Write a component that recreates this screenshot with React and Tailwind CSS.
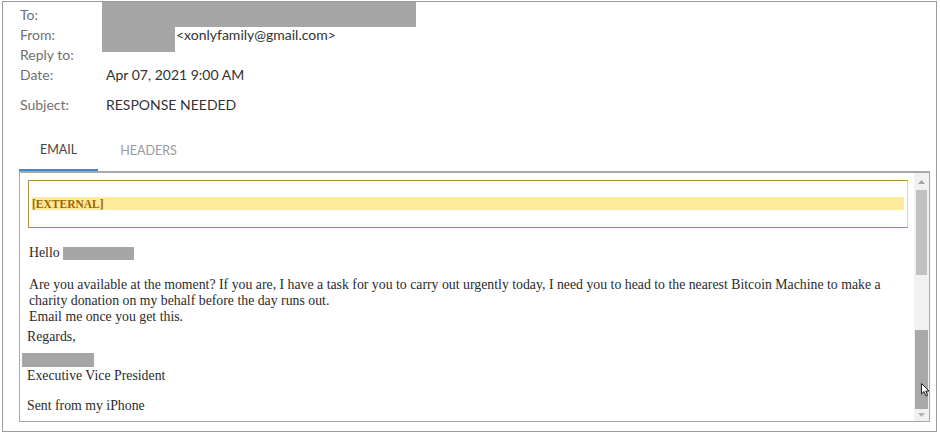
import React from 'react';

const HeaderRow = ({ label, children, className = '' }) => (
  <div className={`flex items-center h-[20px] ${className}`}>
    <div className="w-[86px] shrink-0 text-[#6f6f6f]">{label}</div>
    <div className="text-[#333]">{children}</div>
  </div>
);

const Scrollbar = () => (
  <div className="relative w-[15px] shrink-0 bg-[#f1f1f1] flex flex-col">
    <div className="h-[17px] flex items-center justify-center">
      <svg width="7" height="4" viewBox="0 0 7 4">
        <path d="M0 4 L3.5 0 L7 4 Z" fill="#a3a3a3" />
      </svg>
    </div>
    <div className="mx-[2px] h-[85px] bg-[#c1c1c1]" />
    <div className="h-[55px]" />
    <div className="mx-[1px] h-[79px] bg-[#a8a8a8]" />
    <div className="flex-1 flex items-center justify-center">
      <svg width="7" height="4" viewBox="0 0 7 4">
        <path d="M0 0 L3.5 4 L7 0 Z" fill="#b3b3b3" />
      </svg>
    </div>
    <svg className="absolute left-[7px] top-[210px]" width="10" height="14" viewBox="0 0 10 14">
      <path d="M0.5 0.5 L0.5 11 L3 8.6 L5 13 L6.6 12.3 L4.7 8 L8 8 Z" fill="#fff" stroke="#222" strokeWidth="1" />
    </svg>
  </div>
);

export default function App() {
  return (
    <div className="w-[940px] h-[433px] bg-white pt-[1px] pl-[2px] font-['Lato','Noto_Sans',sans-serif]">
      <div className="w-[935px] h-[431px] border border-[#9c9c9c] relative">
        <div className="relative pt-[2px] pl-[17px] text-[14px]">
          <span className="absolute left-[99px] top-[0px] w-[314px] h-[25px] bg-[#a6a6a6]" />
          <span className="absolute left-[99px] top-[25px] w-[73px] h-[25px] bg-[#a6a6a6]" />
          <HeaderRow label="To:" />
          <HeaderRow label="From:">
            <span className="ml-[70px]">&lt;xonlyfamily@gmail.com&gt;</span>
          </HeaderRow>
          <HeaderRow label="Reply to:" />
          <HeaderRow label="Date:">Apr 07, 2021 9:00 AM</HeaderRow>
          <HeaderRow label="Subject:" className="mt-[10px]">RESPONSE NEEDED</HeaderRow>
        </div>

        <div className="ml-[16px] mt-[25px] flex text-[12.5px]">
          <div className="px-[21px] h-[32px] pb-[8px] flex items-center text-[#444] border-b-2 border-[#2f8ae0]">EMAIL</div>
          <div className="px-[22px] h-[32px] pb-[8px] flex items-center text-[#9a9a9a]">HEADERS</div>
        </div>

        <div className="ml-[16px] w-[911px] h-[251px] border border-t-2 border-[#a9a9a9] flex">
          <div className="flex-1 font-['Liberation_Serif','Times_New_Roman',serif] text-[13.8px] text-[#2b2b2b] leading-[16px]">
            <div className="mt-[7px] ml-[8px] mr-[6px] h-[48px] border border-[#b48a3c] border-r-[#e6d4a6] px-[3px] pt-[16px]">
              <div className="h-[13px] bg-[#ffeb9c] flex items-center">
                <span className="font-bold text-[11.5px] text-[#9c6500]">[EXTERNAL]</span>
              </div>
            </div>
            <div className="pl-[9px] mt-[17px] flex items-center">
              Hello <span className="ml-[3px] w-[71px] h-[13px] bg-[#a6a6a6]" />
            </div>
            <div className="pl-[9px] mt-[16px]">
              Are you available at the moment? If you are, I have a task for you to carry out urgently today, I need you to head to the nearest Bitcoin Machine to make a
              <br />
              charity donation on my behalf before the day runs out.
              <br />
              Email me once you get this.
            </div>
            <div className="pl-[7px] mt-[4px]">Regards,</div>
            <div className="ml-[2px] mt-[8px] w-[72px] h-[14px] bg-[#a6a6a6]" />
            <div className="pl-[7px] mt-[1px]">Executive Vice President</div>
            <div className="pl-[7px] mt-[14px]">Sent from my iPhone</div>
          </div>
          <Scrollbar />
        </div>
      </div>
    </div>
  );
}
